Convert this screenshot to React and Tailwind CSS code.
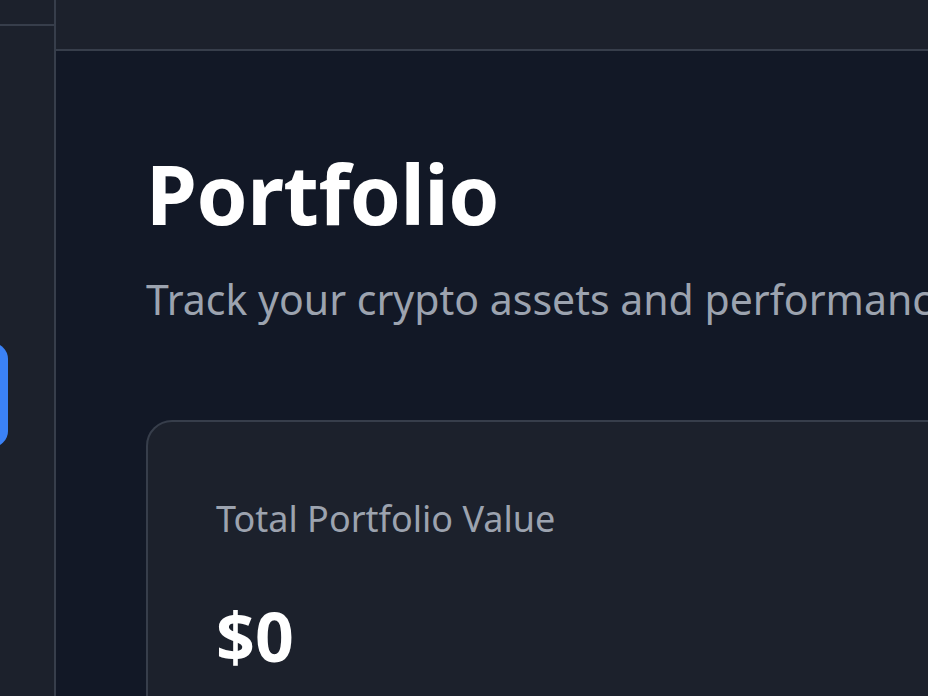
export default function App() {
  return (
    <div
      className="flex h-[696px] w-[928px] overflow-hidden bg-[#121826] text-white"
      style={{ fontFamily: '"Noto Sans", "Open Sans", sans-serif' }}
    >
      {/* sidebar, cut off at the left edge */}
      <aside className="flex w-[56px] shrink-0 flex-col border-r-2 border-[#373e4b] bg-[#1c212c]">
        <div className="h-[26px] border-b-2 border-[#373e4b]" />
        <div className="mt-[317px] -ml-[100px] h-[104px] w-[108px] rounded-[16px] bg-[#3b82f6]" />
      </aside>

      <main className="flex min-w-0 flex-1 flex-col">
        <header className="h-[51px] shrink-0 border-b-2 border-[#373e4b] bg-[#1c212c]" />

        <section className="flex-1 pl-[90px] pt-[94px]">
          <h1 className="whitespace-nowrap text-[82px] font-bold leading-[96px] tracking-[-0.5px]">Portfolio</h1>
          <p className="mt-[30px] whitespace-nowrap text-[41px] leading-[56px] text-[#9ca3af]">
            Track your crypto assets and performance
          </p>

          <div className="mt-[93px] w-[900px] rounded-tl-[26px] border-2 border-[#373e4b] bg-[#1c212c] pl-[68px] pt-[73px] pb-[40px]">
            <p className="whitespace-nowrap text-[36px] leading-[48px] text-[#9ca3af]">Total Portfolio Value</p>
            <p className="mt-[53px] text-[68px] font-bold leading-[80px]">$0</p>
          </div>
        </section>
      </main>
    </div>
  )
}
